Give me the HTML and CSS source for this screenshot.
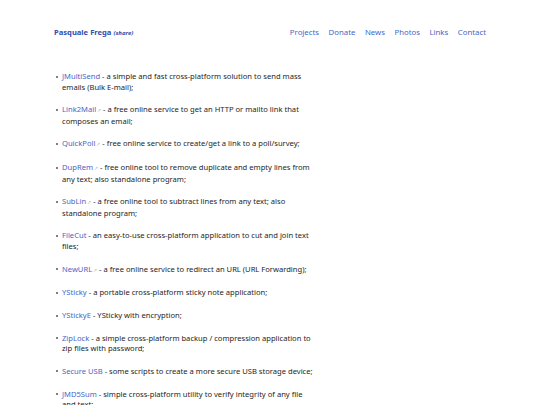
FILE: index.html
```html
<!DOCTYPE html>
<html lang="en">
<head>
<meta charset="utf-8">
<title>Pasquale Frega</title>
<link rel="stylesheet" href="styles.css">
</head>
<body>
<div class="page">
  <header class="header">
    <a class="brand" href="#">Pasquale Frega <em class="share">(share)</em></a>
    <nav class="nav">
      <a href="#">Projects</a>
      <a href="#">Donate</a>
      <a href="#">News</a>
      <a href="#">Photos</a>
      <a href="#">Links</a>
      <a href="#">Contact</a>
    </nav>
  </header>
  <ul class="list">
    <li><a href="#">JMultiSend</a> - a simple and fast cross-platform solution to send mass emails (Bulk E-mail);</li>
    <li><a href="#" class="ext">Link2Mail</a> - a free online service to get an HTTP or mailto link that composes an email;</li>
    <li><a href="#" class="ext">QuickPoll</a> - free online service to create/get a link to a poll/survey;</li>
    <li><a href="#" class="ext">DupRem</a> - free online tool to remove duplicate and empty lines from any text; also standalone program;</li>
    <li><a href="#" class="ext">SubLin</a> - a free online tool to subtract lines from any text; also standalone program;</li>
    <li><a href="#">FileCut</a> - an easy-to-use cross-platform application to cut and join text files;</li>
    <li><a href="#" class="ext">NewURL</a> - a free online service to redirect an URL (URL Forwarding);</li>
    <li><a href="#">YSticky</a> - a portable cross-platform sticky note application;</li>
    <li><a href="#">YStickyE</a> - YSticky with encryption;</li>
    <li><a href="#">ZipLock</a> - a simple cross-platform backup / compression application to zip files with password;</li>
    <li><a href="#">Secure USB</a> - some scripts to create a more secure USB storage device;</li>
    <li><a href="#">JMD5Sum</a> - simple cross-platform utility to verify integrity of any file and text;</li>
  </ul>
</div>
</body>
</html>
```
FILE: styles.css
```css
html, body {
  margin: 0;
  padding: 0;
  background: #ffffff;
}
body {
  font-family: "Noto Sans", "Open Sans", sans-serif;
  font-size: 7.6px;
  color: #1e1e1e;
}
a {
  text-decoration: none;
  color: #4866c6;
}
.page {
  width: 432px;
  margin: 0 auto;
}
.header {
  display: flex;
  justify-content: space-between;
  align-items: center;
  padding-top: 26px;
  height: 12px;
}
.brand {
  font-weight: bold;
  color: #2f4fae;
  font-size: 7.6px;
}
.share {
  font-size: 6px;
}
.nav {
  display: flex;
  gap: 9.5px;
}
.nav a {
  font-size: 7.8px;
}
.list {
  list-style: none;
  margin: 33px 0 0 2px;
  padding: 0;
  width: 262px;
}
.list li {
  position: relative;
  padding-left: 6px;
  line-height: 10.5px;
  margin-bottom: 12.2px;
}
.list li::before {
  content: "";
  position: absolute;
  left: 0;
  top: 4.5px;
  width: 2px;
  height: 2px;
  border-radius: 50%;
  background: #555;
}
.ext::after {
  content: "\2197";
  font-size: 5px;
  color: #bbb;
  margin-left: 1px;
}
```
